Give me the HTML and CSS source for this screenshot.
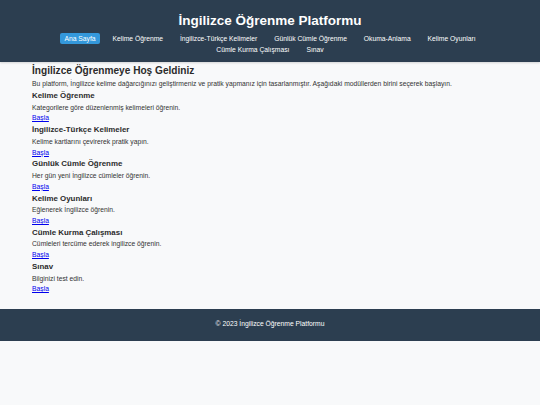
FILE: index.html
```html
<!DOCTYPE html>
<html lang="tr">
<head>
<meta charset="utf-8">
<title>İngilizce Öğrenme Platformu</title>
<link rel="stylesheet" href="styles.css">
</head>
<body>
<header class="site-header">
  <h1 class="site-title">İngilizce Öğrenme Platformu</h1>
  <ul class="nav">
    <li><a class="active" href="#">Ana Sayfa</a></li>
    <li><a href="#">Kelime Öğrenme</a></li>
    <li><a href="#">İngilizce-Türkçe Kelimeler</a></li>
    <li><a href="#">Günlük Cümle Öğrenme</a></li>
    <li><a href="#">Okuma-Anlama</a></li>
    <li><a href="#">Kelime Oyunları</a></li>
    <li><a href="#">Cümle Kurma Çalışması</a></li>
    <li><a href="#">Sınav</a></li>
  </ul>
</header>
<main class="content">
  <h2 class="welcome">İngilizce Öğrenmeye Hoş Geldiniz</h2>
  <p class="intro">Bu platform, İngilizce kelime dağarcığınızı geliştirmeniz ve pratik yapmanız için tasarlanmıştır. Aşağıdaki modüllerden birini seçerek başlayın.</p>
  <div class="module">
    <h3>Kelime Öğrenme</h3>
    <p>Kategorilere göre düzenlenmiş kelimeleri öğrenin.</p>
    <a href="#">Başla</a>
  </div>
  <div class="module">
    <h3>İngilizce-Türkçe Kelimeler</h3>
    <p>Kelime kartlarını çevirerek pratik yapın.</p>
    <a href="#">Başla</a>
  </div>
  <div class="module">
    <h3>Günlük Cümle Öğrenme</h3>
    <p>Her gün yeni İngilizce cümleler öğrenin.</p>
    <a href="#">Başla</a>
  </div>
  <div class="module">
    <h3>Kelime Oyunları</h3>
    <p>Eğlenerek İngilizce öğrenin.</p>
    <a href="#">Başla</a>
  </div>
  <div class="module">
    <h3>Cümle Kurma Çalışması</h3>
    <p>Cümleleri tercüme ederek ingilizce öğrenin.</p>
    <a href="#">Başla</a>
  </div>
  <div class="module">
    <h3>Sınav</h3>
    <p>Bilginizi test edin.</p>
    <a href="#">Başla</a>
  </div>
</main>
<footer class="site-footer">
  <p>© 2023 İngilizce Öğrenme Platformu</p>
</footer>
</body>
</html>
```
FILE: styles.css
```css
html, body {
  margin: 0;
  padding: 0;
}
body {
  background: #f8f9fa;
  color: #333;
  font-family: "Liberation Sans", Arial, sans-serif;
  font-size: 6.75px;
  line-height: 1.6;
}
.site-header {
  background: #2c3e50;
  color: #fff;
  text-align: center;
  padding: 9.5px 0 6.4px;
  box-shadow: 0 1px 2px rgba(0, 0, 0, 0.15);
}
.site-title {
  margin: 0 0 3.2px;
  font-size: 13.5px;
  line-height: 21.6px;
  font-weight: bold;
}
.nav {
  display: flex;
  flex-wrap: wrap;
  justify-content: center;
  column-gap: 8.5px;
  max-width: 480px;
  margin: 0 auto;
  padding: 0;
  list-style: none;
}
.nav li {
  line-height: 10.8px;
}
.nav a {
  color: #fff;
  text-decoration: none;
  padding: 2.2px 4.2px;
  border-radius: 2px;
}
.nav a.active {
  background: #3498db;
}
.content {
  padding: 0.6px 32px 13.8px;
}
.welcome {
  margin: 0;
  font-size: 10.125px;
  line-height: 16.2px;
  color: #2b2b2b;
}
.intro {
  margin: 0;
}
.module h3 {
  margin: 0;
  font-size: 7.9px;
  line-height: 12.64px;
  color: #2b2b2b;
}
.module p {
  margin: 0;
}
.module a {
  color: #0000ee;
}
.site-footer {
  background: #2c3e50;
  color: #fff;
  text-align: center;
  padding: 10.4px 0;
}
.site-footer p {
  margin: 0;
}
```
